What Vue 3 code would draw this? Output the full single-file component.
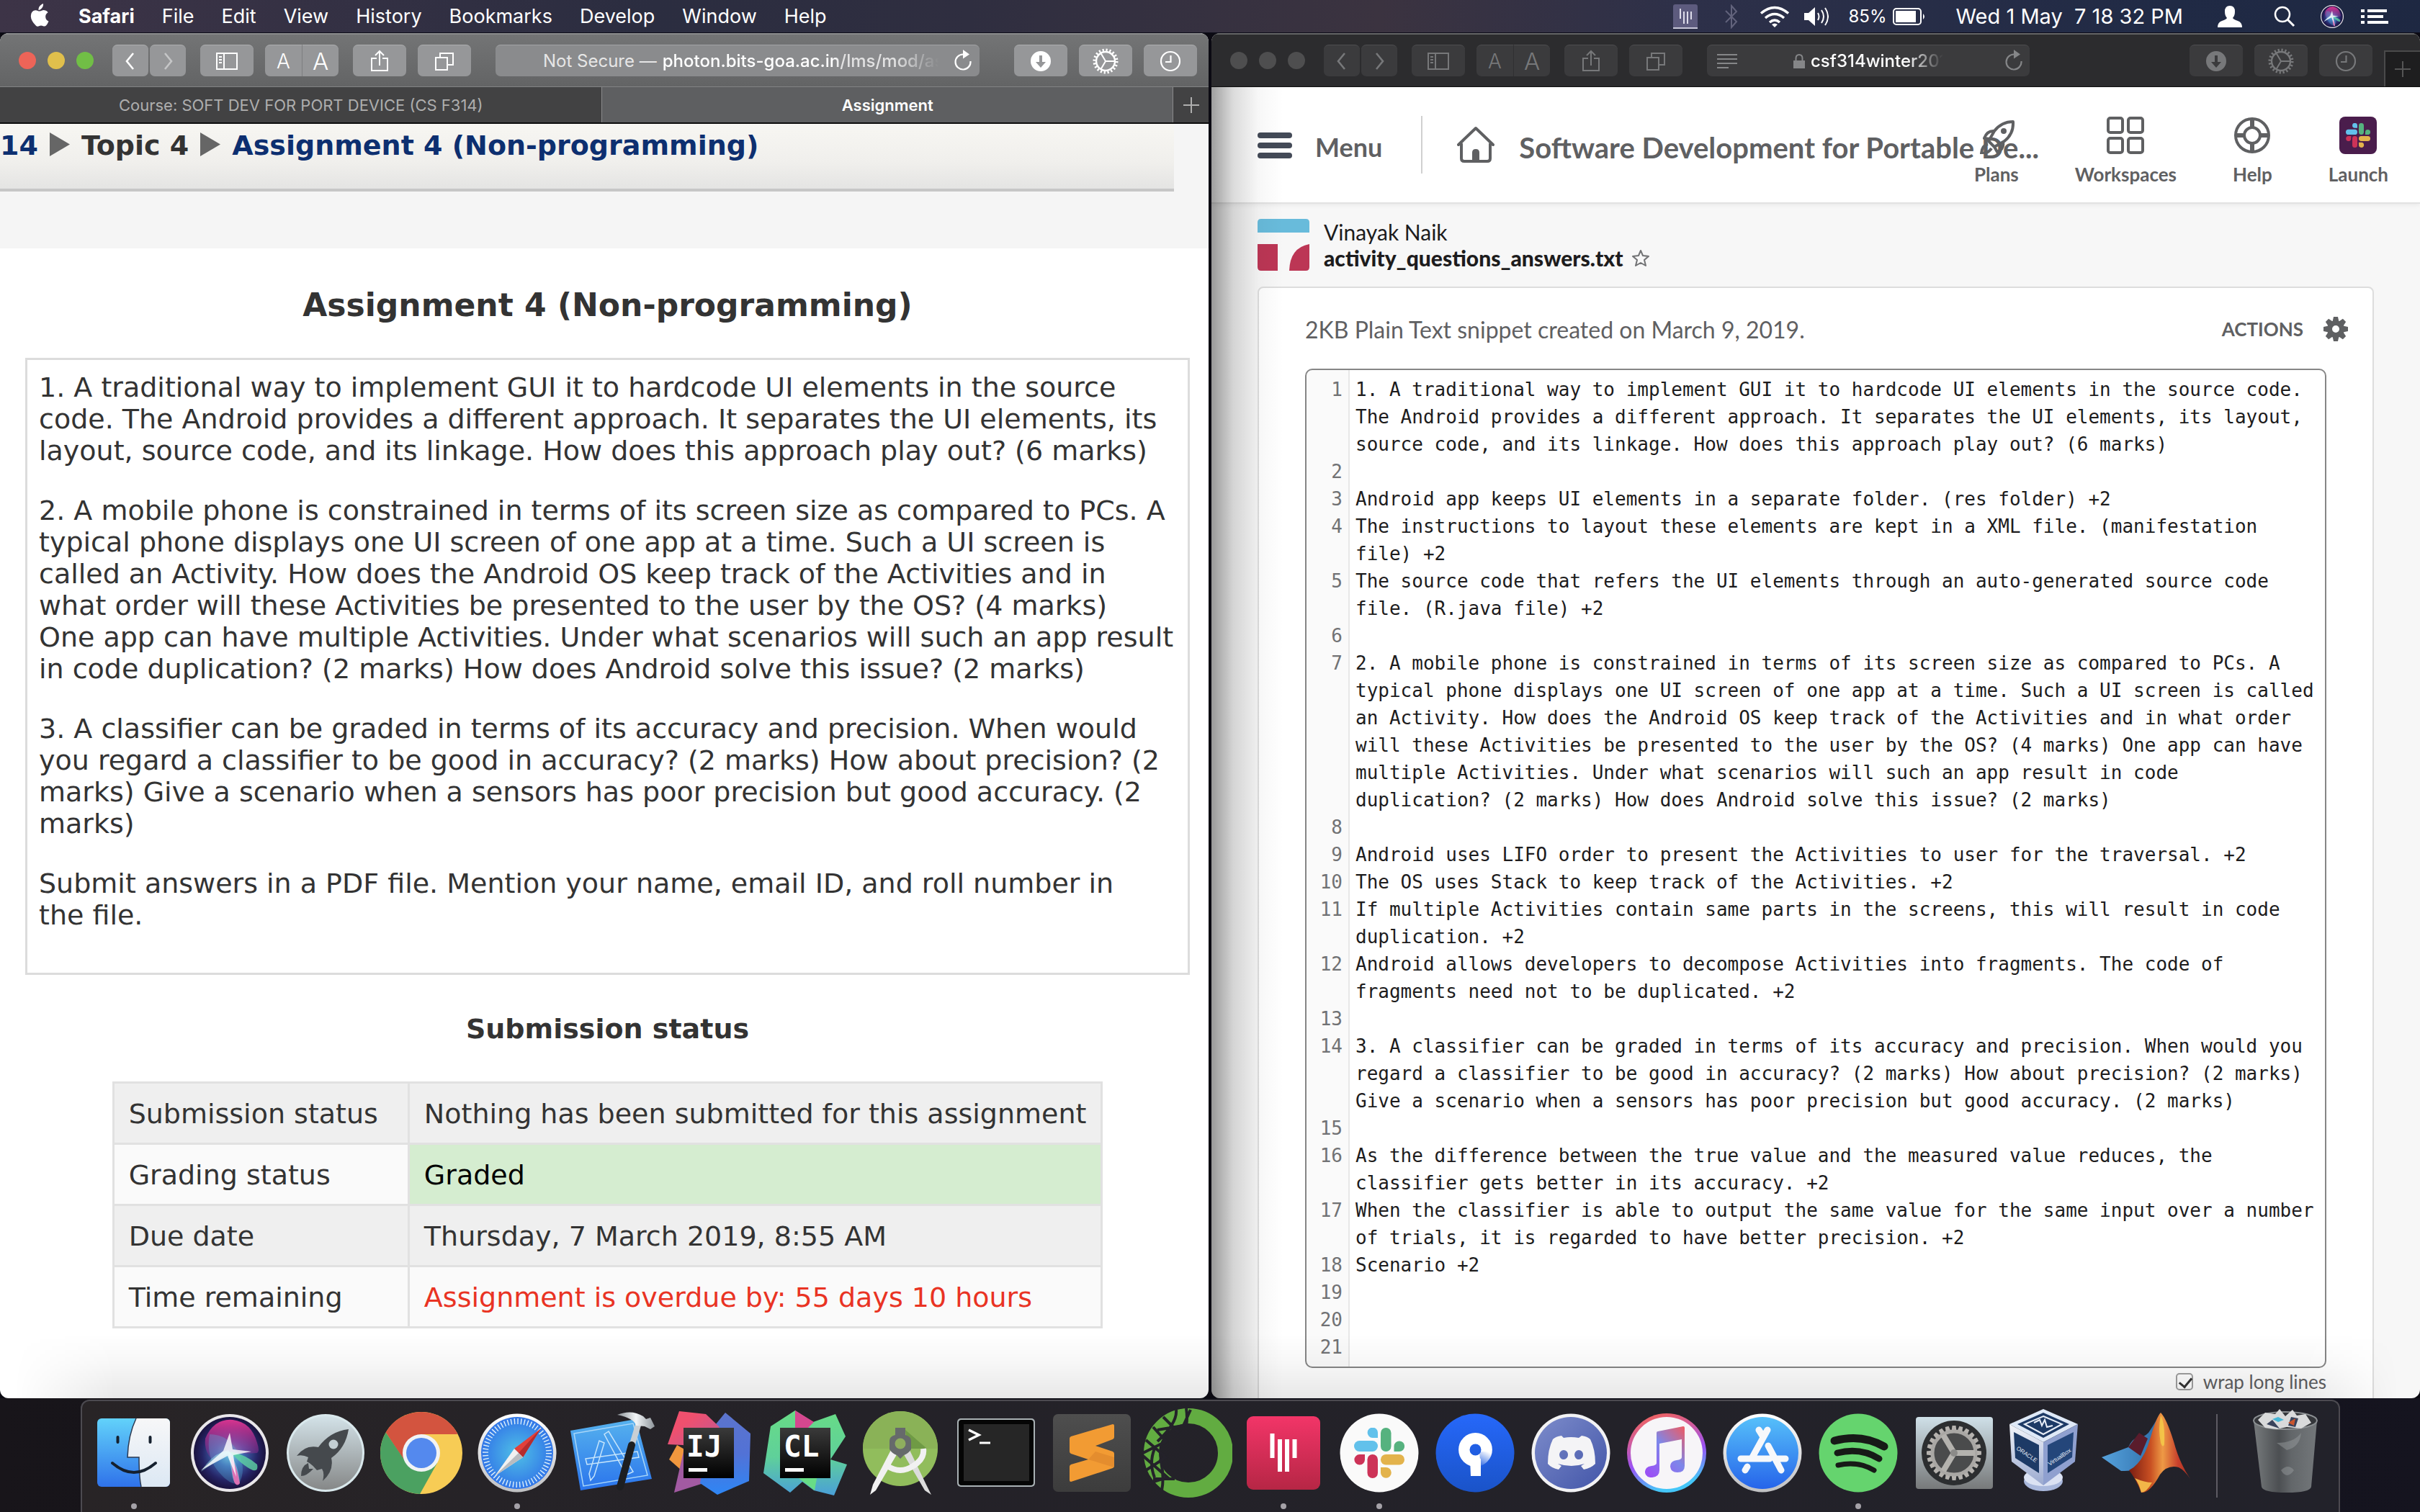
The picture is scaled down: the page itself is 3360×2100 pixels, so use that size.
<script setup>
const menus = ['File', 'Edit', 'View', 'History', 'Bookmarks', 'Develop', 'Window', 'Help']

const questions = [
  `1. A traditional way to implement GUI it to hardcode UI elements in the source
code. The Android provides a different approach. It separates the UI elements, its
layout, source code, and its linkage. How does this approach play out? (6 marks)`,
  `2. A mobile phone is constrained in terms of its screen size as compared to PCs. A
typical phone displays one UI screen of one app at a time. Such a UI screen is
called an Activity. How does the Android OS keep track of the Activities and in
what order will these Activities be presented to the user by the OS? (4 marks)
One app can have multiple Activities. Under what scenarios will such an app result
in code duplication? (2 marks) How does Android solve this issue? (2 marks)`,
  `3. A classifier can be graded in terms of its accuracy and precision. When would
you regard a classifier to be good in accuracy? (2 marks) How about precision? (2
marks) Give a scenario when a sensors has poor precision but good accuracy. (2
marks)`,
  `Submit answers in a PDF file. Mention your name, email ID, and roll number in
the file.`,
]

const statusRows = [
  { label: 'Submission status', value: 'Nothing has been submitted for this assignment', tone: '' },
  { label: 'Grading status', value: 'Graded', tone: 'graded' },
  { label: 'Due date', value: 'Thursday, 7 March 2019, 8:55 AM', tone: '' },
  { label: 'Time remaining', value: 'Assignment is overdue by: 55 days 10 hours', tone: 'overdue' },
]

const snippet = [
  `1. A traditional way to implement GUI it to hardcode UI elements in the source code.
The Android provides a different approach. It separates the UI elements, its layout,
source code, and its linkage. How does this approach play out? (6 marks)`,
  '',
  'Android app keeps UI elements in a separate folder. (res folder) +2',
  `The instructions to layout these elements are kept in a XML file. (manifestation
file) +2`,
  `The source code that refers the UI elements through an auto-generated source code
file. (R.java file) +2`,
  '',
  `2. A mobile phone is constrained in terms of its screen size as compared to PCs. A
typical phone displays one UI screen of one app at a time. Such a UI screen is called
an Activity. How does the Android OS keep track of the Activities and in what order
will these Activities be presented to the user by the OS? (4 marks) One app can have
multiple Activities. Under what scenarios will such an app result in code
duplication? (2 marks) How does Android solve this issue? (2 marks)`,
  '',
  'Android uses LIFO order to present the Activities to user for the traversal. +2',
  'The OS uses Stack to keep track of the Activities. +2',
  `If multiple Activities contain same parts in the screens, this will result in code
duplication. +2`,
  `Android allows developers to decompose Activities into fragments. The code of
fragments need not to be duplicated. +2`,
  '',
  `3. A classifier can be graded in terms of its accuracy and precision. When would you
regard a classifier to be good in accuracy? (2 marks) How about precision? (2 marks)
Give a scenario when a sensors has poor precision but good accuracy. (2 marks)`,
  '',
  `As the difference between the true value and the measured value reduces, the
classifier gets better in its accuracy. +2`,
  `When the classifier is able to output the same value for the same input over a number
of trials, it is regarded to have better precision. +2`,
  'Scenario +2',
  '',
  '',
  '',
]

const windows = [
  { kind: 'moodle', url: 'photon.bits-goa.ac.in/lms/mod/as' },
  { kind: 'slack', url: 'csf314winter201' },
]

const dock = [
  { id: 'finder', name: 'Finder', running: true },
  { id: 'siri', name: 'Siri' },
  { id: 'launchpad', name: 'Launchpad' },
  { id: 'chrome', name: 'Chrome' },
  { id: 'safari', name: 'Safari', running: true },
  { id: 'xcode', name: 'Xcode' },
  { id: 'idea', name: 'IntelliJ IDEA', marks: [{ text: 'IJ', x: 31, y: 67, kind: 'glyph', turn: 0 }] },
  { id: 'clion', name: 'CLion', marks: [{ text: 'CL', x: 33, y: 67, kind: 'glyph', turn: 0 }] },
  { id: 'studio', name: 'Android Studio' },
  { id: 'terminal', name: 'Terminal' },
  { id: 'sublime', name: 'Sublime Text' },
  { id: 'anaconda', name: 'Anaconda' },
  { id: 'bars', name: 'Reader', running: true },
  { id: 'slackapp', name: 'Slack', running: true },
  { id: 'sourcetree', name: 'Sourcetree' },
  { id: 'discord', name: 'Discord' },
  { id: 'itunes', name: 'iTunes' },
  { id: 'appstore', name: 'App Store' },
  { id: 'spotify', name: 'Spotify', running: true },
  { id: 'prefs', name: 'System Preferences' },
  {
    id: 'vbox',
    name: 'VirtualBox',
    marks: [
      { text: 'ORACLE', x: 15, y: 57, kind: 'tiny', turn: 34 },
      { text: 'VirtualBox', x: 62, y: 80, kind: 'tiny', turn: -34 },
    ],
  },
  { id: 'matlab', name: 'MATLAB' },
]

const gearTeeth = Array.from({ length: 24 }, (_, i) => i * 15)
</script>

<template>
  <div class="desktop">
    <svg class="sprite" aria-hidden="true">
      <defs>
        <linearGradient id="gFinder" x2="0" y2="1"><stop offset="0" stop-color="#62d2fa" /><stop offset="1" stop-color="#2f72ea" /></linearGradient>
        <linearGradient id="gFinderR" x2="0" y2="1"><stop offset="0" stop-color="#f7f7f8" /><stop offset="1" stop-color="#dce8f4" /></linearGradient>
        <radialGradient id="gSiri" cx=".5" cy=".5" r=".55"><stop offset="0" stop-color="#7fd9e6" /><stop offset=".35" stop-color="#3f66b0" /><stop offset=".7" stop-color="#252465" /><stop offset="1" stop-color="#150b2e" /></radialGradient>
        <linearGradient id="gSiriPink" x2="0" y2="1"><stop offset="0" stop-color="#d8348f" /><stop offset="1" stop-color="#8a2f97" stop-opacity=".3" /></linearGradient>
        <linearGradient id="gLaunch" x2="0" y2="1"><stop offset="0" stop-color="#d3e2e8" /><stop offset="1" stop-color="#868888" /></linearGradient>
        <radialGradient id="gSafari" cx=".5" cy=".5" r=".55"><stop offset="0" stop-color="#4fc0e6" /><stop offset="1" stop-color="#2f6fe8" /></radialGradient>
        <linearGradient id="gXcode" x2="0" y2="1"><stop offset="0" stop-color="#56b2ee" /><stop offset="1" stop-color="#2a74ec" /></linearGradient>
        <linearGradient id="gHammer"><stop offset="0" stop-color="#8a9196" /><stop offset=".5" stop-color="#f2f5f7" /><stop offset="1" stop-color="#8e959b" /></linearGradient>
        <linearGradient id="gBlack" x2="0" y2="1"><stop offset="0" stop-color="#3a3a3a" /><stop offset="1" stop-color="#000" /></linearGradient>
        <linearGradient id="gIdeaPink" x2="1" y2="1"><stop offset=".3" stop-color="#f0506e" /><stop offset="1" stop-color="#b55a9c" /></linearGradient>
        <linearGradient id="gIdeaBlue" x2="0" y2="1"><stop offset="0" stop-color="#5c74cc" /><stop offset=".5" stop-color="#5272d6" /><stop offset="1" stop-color="#2e86f5" /></linearGradient>
        <linearGradient id="gClion" x2="0" y2="1"><stop offset="0" stop-color="#68dc86" /><stop offset=".55" stop-color="#5fd09a" /><stop offset="1" stop-color="#4a9fd8" /></linearGradient>
        <linearGradient id="gBars" x2="0" y2="1"><stop offset="0" stop-color="#f23568" /><stop offset="1" stop-color="#b62645" /></linearGradient>
        <linearGradient id="gTree" x2="0" y2="1"><stop offset="0" stop-color="#2668fa" /><stop offset="1" stop-color="#1a53c8" /></linearGradient>
        <linearGradient id="gTreeFade" x1=".6" y1="0" x2=".2" y2="1"><stop offset="0" stop-color="#1e5ce0" stop-opacity="0" /><stop offset="1" stop-color="#1e5ce0" /></linearGradient>
        <linearGradient id="gDiscord" x2="1" y2="1"><stop offset="0" stop-color="#7d8ccb" /><stop offset="1" stop-color="#4255a8" /></linearGradient>
        <linearGradient id="gTunes" x2=".3" y2="1"><stop offset="0" stop-color="#f9654b" /><stop offset=".35" stop-color="#d25c9b" /><stop offset=".65" stop-color="#9a52f5" /><stop offset="1" stop-color="#45c6f8" /></linearGradient>
        <linearGradient id="gNote" x1="1" y1="0" x2=".2" y2="1"><stop offset="0" stop-color="#f05a60" /><stop offset=".5" stop-color="#7d87ea" /><stop offset="1" stop-color="#9a52f5" /></linearGradient>
        <linearGradient id="gStore" x2="0" y2="1"><stop offset="0" stop-color="#56c0fa" /><stop offset="1" stop-color="#2664ea" /></linearGradient>
        <linearGradient id="gRim" x2="0" y2="1"><stop offset="0" stop-color="#fff" /><stop offset="1" stop-color="#bfc0c2" /></linearGradient>
        <linearGradient id="gPrefs" x2="0" y2="1"><stop offset="0" stop-color="#cfe0e8" /><stop offset="1" stop-color="#77797a" /></linearGradient>
        <linearGradient id="gSublime" x2="0" y2="1"><stop offset="0" stop-color="#4e4e4e" /><stop offset="1" stop-color="#3c3c3c" /></linearGradient>
        <linearGradient id="gMatlab"><stop offset="0" stop-color="#7a1d12" /><stop offset=".35" stop-color="#c84f22" /><stop offset=".55" stop-color="#ee9a45" /><stop offset=".8" stop-color="#c8402c" /><stop offset="1" stop-color="#a8301f" /></linearGradient>
        <linearGradient id="gMatlabBlue"><stop offset="0" stop-color="#56a2dc" /><stop offset="1" stop-color="#2c6ca8" /></linearGradient>
        <linearGradient id="gTrash"><stop offset="0" stop-color="#777b7d" /><stop offset=".4" stop-color="#4c4f52" /><stop offset=".6" stop-color="#63676a" /><stop offset="1" stop-color="#73777a" /></linearGradient>
        <linearGradient id="gVbox" x2="0" y2="1"><stop offset="0" stop-color="#f3f5fa" /><stop offset="1" stop-color="#9aa9cf" /></linearGradient>
      </defs>

      <symbol id="back" viewBox="0 0 40 40"><path d="M24 9 15 20l9 11" fill="none" stroke="currentColor" stroke-width="2.6" /></symbol>
      <symbol id="forward" viewBox="0 0 40 40"><path d="m16 9 9 11-9 11" fill="none" stroke="currentColor" stroke-width="2.6" /></symbol>
      <symbol id="sidebar" viewBox="0 0 40 40"><path d="M6 9h28v22H6zM16 9v22M9 14h4M9 18h4M9 22h4" fill="none" stroke="currentColor" stroke-width="2" /></symbol>
      <symbol id="share" viewBox="0 0 40 40"><path d="M16 16H9v17h22V16h-7M20 26V6m-6 6 6-6 6 6" fill="none" stroke="currentColor" stroke-width="2" /></symbol>
      <symbol id="tabs" viewBox="0 0 40 40"><path d="M8 15h16v17H8zM14 15V9h18v16h-8" fill="none" stroke="currentColor" stroke-width="2" /></symbol>
      <symbol id="reload" viewBox="0 0 40 40"><path d="M30.500 20A10.500 10.500 0 1 1 20 10.500h3" fill="none" stroke="currentColor" stroke-width="2.200" /><path d="m20 4 9 6.500-9 6z" fill="currentColor" /></symbol>
      <symbol id="download" viewBox="0 0 40 40"><path fill-rule="evenodd" d="M20 6a14 14 0 1 1 0 28 14 14 0 0 1 0-28zm-2 6v9h-5l7 8 7-8h-5v-9z" fill="currentColor" /></symbol>
      <symbol id="gear" viewBox="0 0 40 40"><g fill="none" stroke="currentColor"><circle cx="20" cy="20" r="15.500" stroke-width="4" stroke-dasharray="2.200 2.670" /><circle cx="20" cy="20" r="13" stroke-width="2.400" /><path d="M20 20h13M20 20 13.500 9M20 20l-6.500 11" stroke-width="2" /></g></symbol>
      <symbol id="clock" viewBox="0 0 40 40"><circle cx="20" cy="20" r="13" fill="none" stroke="currentColor" stroke-width="2.200" /><path d="M20.500 12v9H13" fill="none" stroke="currentColor" stroke-width="2.200" /></symbol>
      <symbol id="plus" viewBox="0 0 24 24"><path d="M12 1v22M1 12h22" stroke="currentColor" stroke-width="2" /></symbol>

      <symbol id="slackmark" viewBox="28 27 70 70">
        <path d="M61 41V34a7.200 7.200 0 1 0-7.300 7z" fill="#62c1eb" /><rect x="28" y="45" width="33" height="15" rx="7.500" fill="#62c1eb" />
        <rect x="65" y="27" width="14.500" height="33" rx="7.200" fill="#56b27f" /><path d="M83.500 60V52.500a7.300 7.300 0 1 1 7.300 7.500z" fill="#56b27f" />
        <path d="M43 64v7a7.300 7.300 0 1 1-7.300-7z" fill="#cd3358" /><rect x="46.500" y="64" width="14.500" height="33" rx="7.200" fill="#cd3358" />
        <rect x="65" y="64" width="33" height="14.500" rx="7.200" fill="#e3b34c" /><path d="M65 82h7.300a7.400 7.400 0 1 1-7.300 7.500z" fill="#e3b34c" />
      </symbol>

      <symbol id="finder" viewBox="0 0 124 124">
        <rect x="11" y="14" width="101" height="95" rx="6" fill="url(#gFinder)" />
        <path d="M65 14h41a6 6 0 0 1 6 6v83a6 6 0 0 1-6 6H72q-3-14-3-41H53q1-31 12-54z" fill="url(#gFinderR)" />
        <path d="M65 14Q54 37 53 68h16q0 27 3 41" fill="none" stroke="#2b3a52" stroke-width="1.500" />
        <path d="M39.500 40v7M84.500 40v7M32 76q30 26 60 0" fill="none" stroke="#15202e" stroke-width="4" stroke-linecap="round" />
      </symbol>
      <symbol id="siri" viewBox="0 0 124 124">
        <circle cx="62" cy="62" r="54" fill="#e9e7ea" /><circle cx="62" cy="62" r="50" fill="url(#gSiri)" />
        <path d="M28 42Q40 14 66 16q26 3 34 32 4 12 0 14-18 2-38-1-14-4-22 12Q26 62 28 42z" fill="url(#gSiriPink)" />
        <path d="M34 36q26 0 40 26 12 24 0 44-14-2-24-14-22-22-16-56z" fill="#58b6e0" opacity=".3" />
        <path d="M62 60q22 4 38 18 2 10-6 8-14-6-32-26z" fill="#5fd4a4" opacity=".8" />
        <path d="M60 62 22 88q16-26 38-30 14 20 16 46-6 6-10-8z" fill="#a8f5f5" opacity=".45" />
        <path d="M64 66q8 16 12 38-4 6-8-2-4-16-4-36z" fill="#f06ab4" opacity=".85" />
        <path d="m62 34 4 23 26 3-25 5 4 30-12-29-37 20 31-27z" fill="#fff" opacity=".8" />
      </symbol>
      <symbol id="launchpad" viewBox="0 0 124 124">
        <circle cx="62" cy="62" r="54" fill="#d9e8ec" /><circle cx="62" cy="62" r="51" fill="url(#gLaunch)" />
        <path d="M94 29q-26 3-42 25-18-4-30 12 8-2 16 2l-2 6q8 4 14 12l7-2q4 6 1 17 16-14 12-32 20-14 24-40z" fill="#45494d" />
        <circle cx="73" cy="50" r="6.500" fill="#c3cfd3" /><path d="M38 76q-10 4-10 18 8 0 17-10l-6 0z" fill="#45494d" />
      </symbol>
      <symbol id="chrome" viewBox="0 0 124 124">
        <circle cx="62" cy="62" r="57" fill="#f7cc55" />
        <path d="M12.600 33.500A57 57 0 0 1 111.400 33.500L112 36H62L40 75z" fill="#d3543f" />
        <path d="M12.600 33.500A57 57 0 0 0 60 119L84 76 40 74z" fill="#4ba161" />
        <circle cx="62" cy="62" r="26" fill="#f1f3f5" /><circle cx="62" cy="62" r="21" fill="#5489ee" />
      </symbol>
      <symbol id="safari" viewBox="0 0 124 124">
        <circle cx="62" cy="62" r="54.500" fill="url(#gRim)" /><circle cx="62" cy="62" r="50" fill="url(#gSafari)" />
        <circle cx="62" cy="62" r="44" fill="none" stroke="#dff0fb" stroke-width="8" stroke-dasharray="1.400 3.208" />
        <path d="M95 28 70 68 58 56z" fill="#e2403a" /><path d="M95 28 70 68l-6-6z" fill="#b52c2e" />
        <path d="m31 94 27-38 12 12z" fill="#f1f1f1" /><path d="m31 94 33-32 6 6z" fill="#b9bcc0" />
      </symbol>
      <symbol id="xcode" viewBox="0 0 124 124">
        <path d="m3 31 91-16 22 83-99 16z" fill="url(#gXcode)" /><path d="m8 35 82-14 20 72-89 15z" fill="none" stroke="#a8d6f8" stroke-width="1.500" />
        <path d="M24 70 96 60l2 8-72 10zM56 32l34 56q-8 4-10 4L50 36zM50 48l-14 46-5 6-2-9 14-46z" fill="none" stroke="#c5e4fb" stroke-width="1.500" />
        <path d="m98 20-10 33" stroke="#c9cfd4" stroke-width="8" />
        <path d="m88 51-16 58" stroke="#1d1f22" stroke-width="10" stroke-linecap="round" />
        <path d="M68 9q20-8 36 2l4 4 6-2 6 12-6 4-8-4-12-1q-2-10-26-15z" fill="url(#gHammer)" />
      </symbol>
      <symbol id="idea" viewBox="0 0 124 124">
        <path d="m18 51-11 20 17 15 20-20z" fill="#f0973e" /><path d="m27 60-13 57 47-15 10-30z" fill="#a25aa2" />
        <path d="m85 6 35 29-2 66-44 19-24-16 12-70z" fill="url(#gIdeaBlue)" /><path d="m21 4 37 4 19 18-18 34-33-9-21-1z" fill="url(#gIdeaPink)" />
        <rect x="27" y="27" width="70" height="70" fill="url(#gBlack)" /><rect x="34" y="83" width="26" height="5" fill="#fff" />
      </symbol>
      <symbol id="clion" viewBox="0 0 124 124">
        <path d="M49 3 15 25 5 90l37 27 17-15 16 12 28 7 18-43-23-7 21-32-14-31-31 11z" fill="url(#gClion)" />
        <path d="m49 3 26 16-10 10H49z" fill="#d5478f" /><path d="m50 94 30-2-4 22z" fill="#68dc86" />
        <rect x="28" y="27" width="70" height="70" fill="url(#gBlack)" /><rect x="35" y="83" width="26" height="5" fill="#fff" />
      </symbol>
      <symbol id="studio" viewBox="0 0 124 124">
        <circle cx="62" cy="56" r="52" fill="#91bd5c" /><path d="M10 56a52 52 0 0 1 104 0z" fill="#8ab257" /><path d="m69 30 30 26H72z" fill="#6f9a45" />
        <path d="m66 60 8-4 24 50 7 14-9-6-28-48z" fill="#dcdcdc" /><path d="m58 60-8-4-26 50-4 14 8-6 28-48z" fill="#f1f1f1" />
        <path d="M44 80q18 12 36 0 16-10 14-24" fill="none" stroke="#f1f1f1" stroke-width="8" />
        <path d="M55 27h14v10q8 2 8 8v12q-4 6-10 8l-5 5-5-5q-6-2-10-8V45q0-6 8-8z" fill="#666a6b" /><circle cx="62" cy="49" r="7.500" fill="#8fae5e" />
      </symbol>
      <symbol id="terminal" viewBox="0 0 124 124">
        <rect x="8" y="14" width="108" height="95" rx="5" fill="#a9b1b4" /><rect x="10" y="16" width="104" height="91" rx="4" fill="#050505" /><rect x="17" y="22" width="91" height="79" fill="#262626" />
        <path d="m24 30 14 7-14 7" fill="none" stroke="#fff" stroke-width="3.500" /><path d="M39 48h15" stroke="#fff" stroke-width="3" />
      </symbol>
      <symbol id="sublime" viewBox="0 0 124 124">
        <rect x="8" y="8" width="108" height="108" rx="7" fill="url(#gSublime)" />
        <path d="M31 42q0-2 2-3l58-17q2 0 2 2v16q0 2-2 3L67 52l24 8q2 1 2 3v17q0 2-2 3l-58 19q-2 0-2-2V81q0-2 2-3l24-7-24-8q-2-1-2-3z" fill="#f29b33" /><path d="m57 71 36 11V68L67 60z" fill="#d9822a" opacity=".55" />
      </symbol>
      <symbol id="anaconda" viewBox="0 0 124 124">
        <circle cx="63" cy="62" r="51.500" fill="none" stroke="#62ac41" stroke-width="21" />
        <path d="M60 0q2 14 0 24M66 2 56 24 20 30M46 2q2 18-26 44M28 12l22 22M14 26l18 20L0 62M4 44l28 24L4 86M0 66l34 30-26 8M24 70q6 24 2 44M16 56q-8 20 0 40M44 98H14" fill="none" stroke="#24222a" stroke-width="4" />
      </symbol>
      <symbol id="bars" viewBox="0 0 124 124">
        <rect x="11" y="11" width="102" height="102" rx="9" fill="url(#gBars)" /><path d="M46.500 35v34M57 43v45M67 43v45M77.500 43v26" stroke="#fff" stroke-width="6" />
      </symbol>
      <symbol id="slackapp" viewBox="0 0 124 124"><circle cx="62" cy="62" r="54.500" fill="#fafafa" /><use href="#slackmark" x="27" y="27" width="70" height="70" /></symbol>
      <symbol id="sourcetree" viewBox="0 0 124 124">
        <circle cx="62" cy="62" r="54.500" fill="url(#gTree)" />
        <circle cx="62.500" cy="57.500" r="15.700" fill="none" stroke="#fff" stroke-width="15.400" />
        <path d="M68 60h19q0 15-17 24z" fill="url(#gTreeFade)" />
        <path d="M55 70q6-4 15 0v24H56z" fill="#fff" />
      </symbol>
      <symbol id="discord" viewBox="0 0 124 124">
        <circle cx="62" cy="62" r="54.500" fill="#f2f2f4" /><circle cx="62" cy="62" r="50" fill="url(#gDiscord)" />
        <path fill-rule="evenodd" d="M52 41q10-2 21 0l4-3q8 1 12 5 7 14 7 34-6 6-16 8l-4-5 5-3q-18 6-37 0l5 3-4 5q-10-2-15-8 0-20 7-34 4-4 12-5zM52 58a6 6.500 0 1 0 .1 13 6 6.500 0 0 0-.1-13zm21 0a6 6.500 0 1 0 .1 13 6 6.500 0 0 0-.1-13z" fill="#f4f4f6" />
      </symbol>
      <symbol id="itunes" viewBox="0 0 124 124">
        <circle cx="62" cy="62" r="55" fill="url(#gTunes)" /><circle cx="62" cy="62" r="50" fill="#f7f5f8" />
        <path d="M48 34q0-2 2-2l35-7q2 0 2 2v53q0 9-10 9-9 0-10-8 0-8 9-9 7-1 7-4V43l-31 6v37q0 9-10 10-9 0-10-7 0-8 9-9 7-1 7-4z" fill="url(#gNote)" />
      </symbol>
      <symbol id="appstore" viewBox="0 0 124 124">
        <circle cx="62" cy="62" r="54.500" fill="url(#gRim)" /><circle cx="62" cy="62" r="50" fill="url(#gStore)" />
        <path d="M69 30 48 68M57 30l5 8M70 52l18 34M32 70h40M82 70h12M41 81l-3 5" fill="none" stroke="#f6f8fb" stroke-width="9" stroke-linecap="round" />
      </symbol>
      <symbol id="spotify" viewBox="0 0 124 124">
        <circle cx="62" cy="62" r="54.500" fill="#65d46e" /><path d="M29 45q38-10 69 8" fill="none" stroke="#171a17" stroke-width="11" stroke-linecap="round" /><path d="M33 62q32-8 58 8" fill="none" stroke="#171a17" stroke-width="9" stroke-linecap="round" /><path d="M34 79q28-6 50 7" fill="none" stroke="#171a17" stroke-width="7" stroke-linecap="round" />
      </symbol>
      <symbol id="prefs" viewBox="0 0 124 124">
        <rect x="9" y="12" width="107" height="100" rx="4" fill="url(#gPrefs)" /><circle cx="62" cy="62" r="45" fill="#2c2e30" />
        <path v-for="a in gearTeeth" :key="a" d="M59.500 24h5l1 8h-7z" fill="#b5b2ae" :transform="`rotate(${a} 62 62)`" />
        <circle cx="62" cy="62" r="30" fill="#4a4b4c" stroke="#a9a7a4" stroke-width="5" /><path d="M62 62h29M62 62 47 37M62 62 47 87" stroke="#b4b2ae" stroke-width="8" /><circle cx="62" cy="62" r="5" fill="#8c8b89" />
      </symbol>
      <symbol id="vbox" viewBox="0 0 124 124">
        <ellipse cx="53" cy="101" rx="27" ry="14" fill="#a9b8dc" /><ellipse cx="53" cy="96" rx="27" ry="12" fill="#dbe2f3" />
        <path d="m53 1 48 21-48 25L6 22z" fill="#dfe9f7" /><path d="m6 22 47 25v60L9 74z" fill="url(#gVbox)" /><path d="m101 22-48 25v60l44-33z" fill="#8fa0cf" />
        <path d="m53 6 36 16-36 19-36-19z" fill="#1d3a66" /><path d="m53 11 26 11-26 14-26-14z" fill="none" stroke="#e8eef8" stroke-width="2" /><path d="m40 20 8-4 3 8 4-8 3 10 8-2" fill="none" stroke="#e8eef8" stroke-width="2" />
        <path d="m12 33 35 18v39L14 69z" fill="#1d3a66" /><path d="m95 33-36 18v39l34-22z" fill="#24467a" />
      </symbol>
      <symbol id="matlab" viewBox="0 0 124 124">
        <path d="m1 68 37-14q6-12 11-12 10-1 17-8 8-12 17-28-10 60-39 80-6 1-16 1z" fill="url(#gMatlabBlue)" /><path d="m38 54 15-20 12 8-10 24z" fill="#5a1c2c" />
        <path d="M83 6q8 8 18 40 8 30 23 52-8-12-16-16-16-4-26 10-14 26-26 25-8-20-17-31 20-10 30-46 8-28 14-34z" fill="url(#gMatlab)" />
        <path d="M83 10q6 10 5 40-2 6-5-2-4-20 0-38z" fill="#f6d24a" opacity=".75" /><path d="M56 117q-3-12-9-20 14 6 24 6-8 14-15 14z" fill="#f2b548" />
      </symbol>
      <symbol id="trash" viewBox="0 0 124 124">
        <path d="m18 17 11 92q2 8 35 8 32 0 34-8l8-92z" fill="url(#gTrash)" /><ellipse cx="62" cy="17" rx="44" ry="12" fill="#34363a" stroke="#8b8f92" stroke-width="2" />
        <path d="m24 16 10-10 14 2 6-7 8 10 10-9 6 8 12-2 8 12-14 8-20-2-14 3-16-2z" fill="#d9dadb" /><path d="m36 22 8-6 10 12zM70 12l10 2-4 12-10-2z" fill="#39435c" /><path d="m44 15 8-3 8 4-8 3z" fill="#46b7d8" /><path d="m66 20 10-6-2 10z" fill="#c9552e" />
        <path d="M50 48q24 0 34-14-2 20-20 24zM56 86q10-10 18 0-10 14-18 0z" fill="#9b9fa2" opacity=".45" />
      </symbol>
    </svg>

    <header class="menubar">
      <nav class="menus">
        <button class="apple" aria-label="Apple menu">
          <svg viewBox="0 0 26 32" width="26" height="32"><path fill="#fff" d="M18 0q.5 4-2 6.500T11.500 9q-.5-3.500 2-6T18 0zM13 10.500q1.500 0 3.500-1t4.500 0q2.500.8 3.600 2.700-3.600 2.200-3.400 6.200.2 4.300 4.300 6Q24 28.500 22 30.500q-1.600 1.700-4 .8-3-1.300-5.300-.2-3 1.400-4.700-.3Q1 24 .8 17.500 1 10 7 9.300q2 0 3.500.7t2.500.5z" /></svg>
        </button>
        <button class="app-name">Safari</button>
        <button v-for="m in menus" :key="m">{{ m }}</button>
      </nav>
      <div class="extras">
        <svg class="e-bars" viewBox="0 0 34 34" width="34" height="34"><rect width="34" height="34" rx="3" fill="#5d5b7e" /><path d="M0 33h34" stroke="#c7c6d8" stroke-width="2" /><path d="M10 6v14M15 10v17M20 10v17M25 10v11" stroke="#dddcea" stroke-width="2" /></svg>
        <svg class="e-bt" viewBox="0 0 20 34" width="20" height="34"><path d="m2 9 15 15-7 8V2l7 8L2 25" fill="none" stroke="#62637c" stroke-width="2" /></svg>
        <svg class="e-wifi" viewBox="0 0 42 30" width="42" height="30"><g fill="none" stroke="#fff" stroke-width="3.500"><path d="M2 10.500q19-16 38 0M8 17q13-11 26 0M14 23q7-6 14 0" /></g><path d="m17 26 4 4 4-4q-4-3-8 0z" fill="#fff" /></svg>
        <svg class="e-vol" viewBox="0 0 34 26" width="34" height="26"><path d="M0 8h6l9-8v26l-9-8H0z" fill="#fff" /><path d="M19 8q3 5 0 10M24 4q6 9 0 18M29 1q8 12 0 24" fill="none" stroke="#fff" stroke-width="2" /></svg>
        <span class="percent">85%</span>
        <svg class="e-bat" viewBox="0 0 46 24" width="46" height="24"><rect x="1" y="1" width="38" height="22" rx="4" fill="none" stroke="#fff" stroke-width="2" /><rect x="4" y="4" width="28" height="16" fill="#fff" /><path d="M42 8q4 4 0 8z" fill="#fff" /></svg>
        <time class="clock">Wed 1 May &nbsp;7 18 32 PM</time>
        <svg class="e-user" viewBox="0 0 34 30" width="34" height="30"><path d="M17 0q7 0 7 8 0 6-3 9 1 2 7 4 6 2 6 9H0q0-7 6-9 6-2 7-4-3-3-3-9 0-8 7-8z" fill="#fff" /></svg>
        <svg class="e-find" viewBox="0 0 30 30" width="30" height="30"><circle cx="12" cy="12" r="10" fill="none" stroke="#fff" stroke-width="2.500" /><path d="m19 19 9 9" stroke="#fff" stroke-width="3" /></svg>
        <svg class="e-siri" viewBox="8 8 108 108" width="32" height="32"><use href="#siri" width="124" height="124" /></svg>
        <svg class="e-list" viewBox="0 0 38 22" width="38" height="22"><path d="M0 3h5M9 3h27M0 11h5M9 11h22M0 19h5M9 19h29" stroke="#fff" stroke-width="4" /></svg>
      </div>
    </header>

    <main class="windows">
      <section v-for="w in windows" :key="w.kind" :class="['window', w.kind]">
        <div class="toolbar">
          <div class="lights"><i class="red"></i><i class="amber"></i><i class="green"></i></div>
          <button class="tool narrow" aria-label="Back"><svg><use href="#back" /></svg></button>
          <button class="tool narrow fwd" aria-label="Forward"><svg><use href="#forward" /></svg></button>
          <button class="tool gap-l" aria-label="Sidebar"><svg><use href="#sidebar" /></svg></button>
          <div class="pair gap-m">
            <button class="tool half small" aria-label="Smaller text">A</button>
            <button class="tool half large" aria-label="Larger text">A</button>
          </div>
          <button class="tool gap-l" aria-label="Share"><svg><use href="#share" /></svg></button>
          <button class="tool gap-m" aria-label="Tab overview"><svg><use href="#tabs" /></svg></button>
          <div class="address">
            <template v-if="w.kind === 'moodle'"><label class="insecure" for="url-moodle">Not Secure —</label></template>
            <template v-else>
              <svg class="reader" viewBox="0 0 28 22"><path d="M0 2h28M0 8h28M0 14h28M0 20h16" stroke="currentColor" stroke-width="2" /></svg>
              <svg class="lock" viewBox="0 0 16 20"><path d="M0 9h16v11H0z" fill="currentColor" /><path d="M3.500 9V6q0-5 4.500-5t4.500 5v3" fill="none" stroke="currentColor" stroke-width="2" /></svg>
            </template>
            <input :id="'url-' + w.kind" class="url" type="text" :value="w.url" aria-label="Address" />
            <button class="reload" aria-label="Reload"><svg><use href="#reload" /></svg></button>
          </div>
          <div class="right-tools">
            <button class="tool" aria-label="Downloads"><svg><use href="#download" /></svg></button>
            <button class="tool gap-m" aria-label="Settings"><svg><use href="#gear" /></svg></button>
            <button class="tool gap-m" aria-label="History"><svg><use href="#clock" /></svg></button>
          </div>
          <button v-if="w.kind === 'slack'" class="corner-tab" aria-label="New tab"><svg><use href="#plus" /></svg></button>
        </div>

        <template v-if="w.kind === 'moodle'">
          <div class="tabbar">
            <button class="tab">Course: SOFT DEV FOR PORT DEVICE (CS F314)</button>
            <button class="tab active">Assignment</button>
            <button class="new-tab" aria-label="New tab"><svg><use href="#plus" /></svg></button>
          </div>
          <div class="crumb-zone">
            <nav class="crumbs">
              <a href="#">14</a>
              <svg viewBox="0 0 28 33"><path d="M0 0l28 16.500L0 33z" fill="#666" /></svg>
              <span>Topic 4</span>
              <svg viewBox="0 0 28 33"><path d="M0 0l28 16.500L0 33z" fill="#666" /></svg>
              <a href="#">Assignment 4 (Non-programming)</a>
            </nav>
          </div>
          <div class="assignment">
            <h1>Assignment 4 (Non-programming)</h1>
            <div class="intro"><p v-for="q in questions" :key="q">{{ q }}</p></div>
            <h2>Submission status</h2>
            <table>
              <tbody>
                <tr v-for="r in statusRows" :key="r.label">
                  <th scope="row">{{ r.label }}</th>
                  <td :class="r.tone">{{ r.value }}</td>
                </tr>
              </tbody>
            </table>
          </div>
        </template>

        <template v-else>
          <header class="site-head">
            <button class="menu-btn"><span class="burger"><i></i><i></i><i></i></span>Menu</button>
            <span class="rule"></span>
            <a class="site" href="#">
              <svg viewBox="0 0 52 52" width="52" height="52"><path d="M2 26 26 3l24 23M6 25v20q0 4 4 4h32q4 0 4-4V25" fill="none" stroke="#5f6062" stroke-width="4" stroke-linecap="round" stroke-linejoin="round" /><path d="M21 49V37q0-5 5-5t5 5v12z" fill="#5f6062" /></svg>
              <span>Software Development for Portable De...</span>
            </a>
            <nav class="site-nav">
              <a href="#">
                <svg viewBox="0 0 52 52"><g fill="none" stroke="#5f6062" stroke-width="4" stroke-linejoin="round"><path d="M49 7Q33 7 23 20l-8 14 8 8 14-8Q50 24 49 7zM23 20q-10-1-14 10l8 1M35 35q2 10-8 14l-4-7M14 38q-8 2-9 13 10 0 14-7" /></g><circle cx="36" cy="20" r="4" fill="#5f6062" /></svg>
                Plans
              </a>
              <a href="#">
                <svg viewBox="0 0 52 52"><g fill="none" stroke="#5f6062" stroke-width="4"><rect x="2" y="2" width="20" height="20" rx="3" /><rect x="30" y="2" width="20" height="20" rx="3" /><rect x="2" y="30" width="20" height="20" rx="3" /><rect x="30" y="30" width="20" height="20" rx="3" /></g></svg>
                Workspaces
              </a>
              <a href="#">
                <svg viewBox="0 0 52 52"><g fill="none" stroke="#5f6062" stroke-width="4"><circle cx="26" cy="26" r="23" /><circle cx="26" cy="26" r="11" /></g><path d="M26 3v12M26 37v12M3 26h12M37 26h12" stroke="#5f6062" stroke-width="6" /></svg>
                Help
              </a>
              <a href="#">
                <svg viewBox="0 0 52 52"><rect width="52" height="52" rx="8" fill="#4a1d4c" /><use href="#slackmark" x="9" y="9" width="34" height="34" /></svg>
                Launch
              </a>
            </nav>
          </header>
          <div class="snippet-page">
            <div class="owner">
              <svg class="avatar" viewBox="0 0 72 72"><path d="M0 19V5q0-5 5-5h62q5 0 5 5v14z" fill="#68bbdb" /><path d="M0 35h28v37H5q-5 0-5-5zM72 35v32q0 5-5 5H44q1-32 28-37z" fill="#bc3655" /></svg>
              <div>
                <div>Vinayak Naik</div>
                <div class="file">
                  <a href="#">activity_questions_answers.txt</a>
                  <svg viewBox="0 0 24 24" width="24" height="24"><path d="m12 2 3 7 8 1-6 5 2 8-7-4-7 4 2-8-6-5 8-1z" fill="none" stroke="#717274" stroke-width="2" stroke-linejoin="round" /></svg>
                </div>
              </div>
            </div>
            <div class="card">
              <div class="card-head">
                <span>2KB Plain Text snippet created on March 9, 2019.</span>
                <button class="actions">ACTIONS
                  <svg viewBox="0 0 34 34" width="34" height="34"><circle cx="17" cy="17" r="8.500" fill="none" stroke="#5f6062" stroke-width="7" /><path v-for="a in 8" :key="a" d="M14 0h6l1.500 7h-9z" fill="#5f6062" :transform="`rotate(${a * 45} 17 17)`" /></svg>
                </button>
              </div>
              <div class="code">
                <div v-for="(line, i) in snippet" :key="i" class="code-row">
                  <span class="num">{{ i + 1 }}</span>
                  <pre>{{ line }}</pre>
                </div>
              </div>
              <label class="wrap"><input type="checkbox" checked /> wrap long lines</label>
            </div>
          </div>
        </template>
      </section>
    </main>

    <footer class="dock">
      <button v-for="app in dock" :key="app.id" :class="['app', { running: app.running }]" :aria-label="app.name">
        <svg viewBox="0 0 124 124">
          <use :href="'#' + app.id" width="124" height="124" />
          <text v-for="m in app.marks" :key="m.text" :x="m.x" :y="m.y" :class="m.kind" :transform="`rotate(${m.turn} ${m.x} ${m.y})`">{{ m.text }}</text>
        </svg>
      </button>
      <span class="separator"></span>
      <button class="app" aria-label="Trash"><svg viewBox="0 0 124 124"><use href="#trash" width="124" height="124" /></svg></button>
    </footer>
  </div>
</template>

<style>
body { background: #121118; }
</style>

<style scoped>
.desktop, .desktop * { box-sizing: border-box; }
.desktop {
  height: 100vh;
  display: flex;
  flex-direction: column;
  overflow: hidden;
  font-family: Inter, Roboto, sans-serif;
  background: linear-gradient(90deg, #18151a, #101018 50%, #15141f);
}
button { border: 0; padding: 0; background: none; font: inherit; color: inherit; }
a { color: inherit; text-decoration: none; }
.sprite { position: absolute; width: 0; height: 0; }
.glyph { font: 700 41px "DejaVu Sans Mono", monospace; fill: #fff; }
.tiny { font: 8px "Liberation Sans", sans-serif; fill: #e8eef8; }

/* menu bar */
.menubar {
  flex: none;
  height: 46px;
  display: flex;
  justify-content: space-between;
  align-items: center;
  color: #fff;
  font-size: 27px;
  line-height: 44px;
  border-bottom: 1px solid #0d0c18;
  background: linear-gradient(90deg, #3d3447, #2b2d40 27%, #2f2e40 40%, #3b3340 57%, #2d3049 70%, #202a45 90%, #1e2842);
}
.menus { display: flex; align-items: center; gap: 38px; padding-left: 42px; }
.apple { display: flex; padding: 0 3px 4px 0; }
.app-name { font-weight: 700; }
.extras { display: flex; align-items: center; padding-right: 44px; }
.e-bt { margin-left: 37px; }
.e-wifi { margin-left: 29px; }
.e-vol { margin-left: 20px; }
.percent { margin-left: 28px; font-size: 24px; }
.e-bat { margin-left: 8px; }
.clock { margin-left: 42px; font-size: 29px; }
.e-user { margin-left: 48px; }
.e-find { margin-left: 44px; }
.e-siri { margin-left: 35px; }
.e-list { margin-left: 24px; }

/* windows */
.windows { flex: 1; min-height: 0; display: grid; grid-template-columns: 1fr 1fr; gap: 4px; background: #0b0a12; }
.window { position: relative; overflow: hidden; min-width: 0; border-radius: 12px; background: #fff; }
.window::after {
  content: "";
  position: absolute;
  inset: auto 0 0 0;
  height: 90px;
  pointer-events: none;
  background: linear-gradient(to bottom, transparent, rgba(0, 0, 0, .03) 45%, rgba(0, 0, 0, .09));
}
.moodle::after { mask-image: linear-gradient(to right, transparent 20px, #000 160px); }
.slack::after { mask-image: linear-gradient(to left, transparent 30px, #000 160px); }
.slack::before {
  content: "";
  position: absolute;
  z-index: 1;
  inset: 75px auto 0 0;
  width: 100px;
  pointer-events: none;
  background: linear-gradient(to right, rgba(0, 0, 0, .38), rgba(0, 0, 0, .14) 30%, rgba(0, 0, 0, .03) 65%, transparent);
}
.toolbar {
  height: 75px;
  display: flex;
  align-items: center;
  padding: 0 16px 0 26px;
  color: #fff;
  border-top: 2px solid #8a8b8c;
  border-bottom: 1px solid #828384;
  background: linear-gradient(#737475, #636465);
}
.lights { display: flex; gap: 16px; margin-right: 26px; }
.lights i { width: 24px; height: 24px; border-radius: 50%; }
.red { background: #ed6458; }
.amber { background: #e0bf4c; }
.green { background: #71be46; }
.tool {
  flex: none;
  width: 74px;
  height: 44px;
  display: flex;
  align-items: center;
  justify-content: center;
  border-radius: 7px;
  border-top: 1px solid #adaeb0;
  background: #969799;
}
.tool svg { width: 40px; height: 40px; }
.narrow { width: 50px; }
.fwd { margin-left: 2px; }
.moodle .fwd svg { opacity: .45; }
.gap-l { margin-left: 20px; }
.gap-m { margin-left: 16px; }
.pair { display: flex; }
.half { width: 51px; font-weight: 300; }
.half + .half { border-left: 1px solid #7d7e80; }
.small { font-size: 28px; border-radius: 7px 0 0 7px; }
.large { font-size: 33px; border-radius: 0 7px 7px 0; }
.address {
  flex: 1;
  min-width: 0;
  height: 44px;
  margin-left: 34px;
  display: flex;
  align-items: center;
  border-radius: 7px;
  border-top: 1px solid #a3a4a6;
  background: #8a8b8d;
  font-size: 24px;
}
.moodle .address { padding-left: 66px; }
.insecure { flex: none; color: #e6e6e6; }
.url {
  width: 384px;
  min-width: 0;
  margin-left: 8px;
  padding: 0;
  border: 0;
  outline: 0;
  background: none;
  font: 500 24px Inter, Roboto, sans-serif;
  color: #fff;
  mask-image: linear-gradient(90deg, #000 62%, rgba(0, 0, 0, .75) 64% 84%, transparent 100%);
}
.reload { margin: 0 3px 0 auto; display: flex; }
.reload svg { width: 40px; height: 40px; }
.right-tools { display: flex; margin-left: 48px; }
.tabbar {
  height: 51px;
  display: flex;
  color: #aeaeae;
  font-size: 22px;
  background: #424243;
  border-bottom: 2px solid #0c0c0c;
}
.tab { flex: 836 1 0; }
.tab.active { flex-grow: 792; color: #fff; font-weight: 600; background: #5e5f61; border: 1px solid #8a8a8b; border-width: 0 1px; }
.new-tab { width: 49px; display: flex; align-items: center; justify-content: center; }
.new-tab svg, .corner-tab svg { width: 24px; height: 24px; }

.slack .toolbar { padding-right: 0; color: #77787a; border-top-color: #646566; border-bottom-color: #111; background: #2c2c2e; }
.slack .lights i { background: #4e4e4f; }
.slack .tool { background: #3b3b3d; border-top-color: #4e4e50; }
.slack .half + .half { border-left-color: #303032; }
.slack .address { flex: 0 1 448px; padding-left: 14px; background: #3b3b3d; border-top-color: #4e4e50; color: #858688; }
.slack .reload { margin-right: 2px; }
.reader { width: 28px; height: 22px; }
.lock { width: 16px; height: 20px; margin-left: 78px; }
.slack .url { width: 184px; mask-image: linear-gradient(90deg, #000 72%, transparent 100%); }
.slack .right-tools { margin-left: auto; }
.corner-tab {
  flex: none;
  width: 50px;
  height: 50px;
  margin-left: 16px;
  align-self: flex-end;
  display: flex;
  align-items: center;
  justify-content: center;
  color: #555;
  background: #1e1e1f;
  border: 2px solid #4a4a4b;
  border-width: 2px 0 0 2px;
}

/* assignment page */
.moodle { font-family: "DejaVu Sans", Verdana, sans-serif; color: #333; font-size: 38px; line-height: 44px; }
.moodle .toolbar, .moodle .tabbar { font-family: Inter, Roboto, sans-serif; }
.crumb-zone { height: 173px; background: #f5f5f5; }
.crumbs {
  height: 94px;
  margin-right: 48px;
  display: flex;
  align-items: flex-start;
  gap: 16px;
  padding-top: 8px;
  font-weight: 700;
  white-space: nowrap;
  border-bottom: 4px solid #c6c6c6;
  background: linear-gradient(#f7f6f2, #f0efec 60%, #e4e4e3);
}
.crumbs a { color: #0d2f70; }
.crumbs svg { flex: none; width: 28px; height: 33px; margin-top: 4px; }
.assignment { padding: 55px 26px 0 35px; }
h1 { margin: 0 0 49px; text-align: center; font-size: 44px; line-height: 48px; }
.intro { padding: 16px 0 19px 16px; border: 3px solid #dcdcdc; }
.intro p { margin: 0 0 39px; white-space: pre; }
h2 { margin: 53px 0 51px; text-align: center; font-size: 38px; line-height: 44px; }
table { margin: 0 auto; border-collapse: collapse; white-space: nowrap; }
th, td { height: 85px; padding: 1px 20px 0; border: 3px solid #e1e1e1; font-weight: 400; text-align: left; background: #fafafa; }
th { padding-right: 41px; }
tr:nth-child(odd) > * { background: #efefef; }
tr .graded { background: #d5edd0; color: #000; }
tr .overdue { color: #e93323; }

/* snippet page */
.slack { font-family: Lato, sans-serif; color: #5f6062; background: #f7f7f7; }
.slack .toolbar { font-family: Inter, Roboto, sans-serif; }
.site-head {
  position: relative;
  height: 162px;
  display: flex;
  align-items: center;
  padding: 0 44px 0 64px;
  background: #fff;
  border-bottom: 2px solid #e2e2e2;
  box-shadow: 0 2px 6px rgba(0, 0, 0, .06);
}
.menu-btn { display: flex; align-items: center; gap: 32px; padding-top: 6px; font-size: 36px; font-weight: 700; }
.burger { display: flex; flex-direction: column; gap: 6px; margin-bottom: 4px; }
.burger i { width: 48px; height: 8px; border-radius: 4px; background: #434a57; }
.rule { width: 2px; height: 80px; margin: 0 48px 0 54px; background: #d0d0d0; }
.site { flex: 1 1 0; min-width: 0; display: flex; align-items: center; gap: 34px; white-space: nowrap; font-size: 40px; font-weight: 700; }
.site svg { flex: none; }
.site span { padding-top: 8px; }
.site-nav { flex: none; display: flex; gap: 78px; padding-top: 17px; font-size: 26px; font-weight: 700; line-height: 32px; }
.site-nav a { display: flex; flex-direction: column; align-items: center; gap: 12px; }
.site-nav svg { width: 52px; height: 52px; }
.snippet-page { padding: 21px 64px 0; }
.owner { display: flex; gap: 20px; font-size: 30px; line-height: 36px; color: #1d1c1d; }
.avatar { width: 72px; height: 72px; }
.file { display: flex; align-items: center; gap: 12px; font-weight: 900; }
.card { height: 1700px; margin-top: 22px; padding: 35px 34px 0 64px; border: 2px solid #dddddd; border-radius: 8px; background: #fff; }
.card-head { display: flex; justify-content: space-between; align-items: center; height: 44px; margin-bottom: 33px; font-size: 32px; }
.actions { display: flex; align-items: center; gap: 28px; font-size: 26px; font-weight: 700; }
.code {
  margin-right: 30px;
  padding: 8px 0;
  border: 2px solid #868686;
  border-radius: 10px;
  color: #1d1c1d;
  font: 26px/38px "DejaVu Sans Mono", monospace;
  background: linear-gradient(90deg, #fafafa 58px, #e8e8e8 58px 60px, transparent 60px);
}
.code-row { display: grid; grid-template-columns: 58px 1fr; }
.num { padding-right: 8px; text-align: right; color: #717274; }
pre { margin: 0; min-height: 38px; padding-left: 10px; font: inherit; }
.wrap { display: flex; justify-content: flex-end; align-items: center; gap: 14px; margin: 3px 30px 0 0; font-size: 26px; line-height: 32px; }
.wrap input { appearance: none; position: relative; width: 24px; height: 24px; margin: 0; border: 2px solid #a0a0a0; border-radius: 5px; background: #fff; }
.wrap input::after { content: ""; position: absolute; left: 6px; top: 1px; width: 8px; height: 14px; border: solid #333; border-width: 0 3px 3px 0; transform: rotate(40deg); }

/* dock */
.dock {
  flex: none;
  align-self: center;
  height: 156px;
  margin-top: 2px;
  display: flex;
  align-items: flex-start;
  padding: 10px 7px 0 6px;
  border: 2px solid #4c4a50;
  border-bottom: 0;
  border-radius: 12px 12px 0 0;
  background: linear-gradient(90deg, #282426, #242228 35%, #22222a);
}
.app { position: relative; width: 133px; height: 144px; display: flex; justify-content: center; }
.app svg { width: 124px; height: 124px; }
.running::after { content: ""; position: absolute; bottom: 4px; left: 62px; width: 8px; height: 8px; border-radius: 50%; background: #a5a2a8; }
.separator { width: 2px; height: 116px; margin: 8px 28px 0 31px; background: #5d5b63; }
</style>
